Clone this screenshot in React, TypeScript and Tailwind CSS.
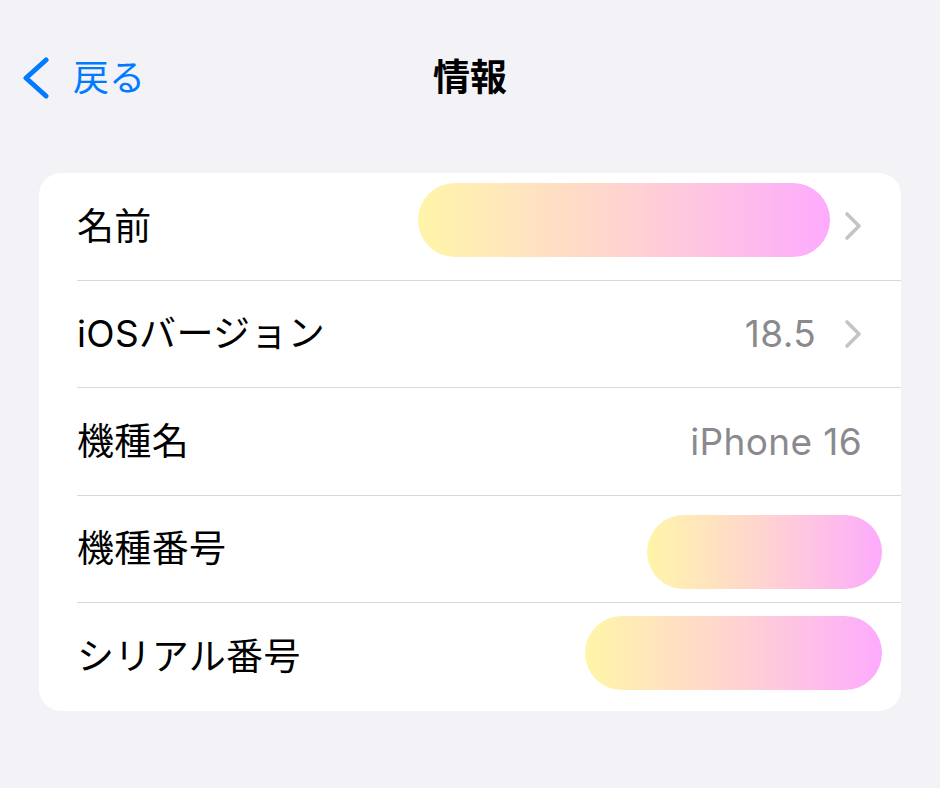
import { ReactNode } from 'react';

const font = { fontFamily: '"Inter", "Noto Sans CJK JP", sans-serif' };

function Chevron() {
  return (
    <svg width="18" height="30" viewBox="0 0 18 30" className="shrink-0">
      <path d="M3 3 L15 15 L3 27" fill="none" stroke="#c4c4c7" strokeWidth="3.6" strokeLinecap="round" strokeLinejoin="round" />
    </svg>
  );
}

function Pill({ w, shift }: { w: string; shift: string }) {
  return <div className={`h-[74px] rounded-full bg-gradient-to-r from-[#fff5a8] via-[#ffd3d0] to-[#fdaafc] ${w} ${shift}`} />;
}

function Row({ label, children, last, pr = 'pr-[39px]' }: { label: string; children?: ReactNode; last?: boolean; pr?: string }) {
  return (
    <div className={`h-[107.5px] flex items-center justify-between ${pr} ${last ? '' : 'border-b border-[#d8d8dc]'}`}>
      <span className="text-[37px] tracking-[0.01em] text-black">{label}</span>
      <div className="flex items-center">{children}</div>
    </div>
  );
}

export default function App() {
  return (
    <div className="w-[940px] h-[788px] bg-[#f2f2f7] overflow-hidden" style={font}>
      <div className="relative h-[155px] flex items-start">
        <div className="flex items-center pl-[22px] pt-[57px] gap-[23px] text-[#007aff]">
          <svg width="28" height="42" viewBox="0 0 28 42">
            <path d="M24 3 L4 21 L24 39" fill="none" stroke="#007aff" strokeWidth="5" strokeLinecap="round" strokeLinejoin="round" />
          </svg>
          <span className="text-[36px] leading-none">戻る</span>
        </div>
        <div className="absolute left-0 right-0 top-[57px] text-center text-[37px] font-bold leading-[42px] text-black">情報</div>
      </div>
      <div className="mx-[39px] mt-[18px] bg-white rounded-[22px] pl-[38px]">
        <Row label="名前">
          <Pill w="w-[412px]" shift="-translate-y-[6px]" />
          <div className="ml-[14px]"><Chevron /></div>
        </Row>
        <Row label="iOSバージョン">
          <span className="text-[37px] tracking-[0.01em] text-[#8a8a8e]">18.5</span>
          <div className="ml-[28px]"><Chevron /></div>
        </Row>
        <Row label="機種名">
          <span className="text-[37px] tracking-[0.01em] text-[#8a8a8e]">iPhone 16</span>
        </Row>
        <Row label="機種番号" pr="pr-[19px]">
          <Pill w="w-[235px]" shift="translate-y-[3px]" />
        </Row>
        <Row label="シリアル番号" last pr="pr-[19px]">
          <Pill w="w-[297px]" shift="-translate-y-[4px]" />
        </Row>
      </div>
    </div>
  );
}
